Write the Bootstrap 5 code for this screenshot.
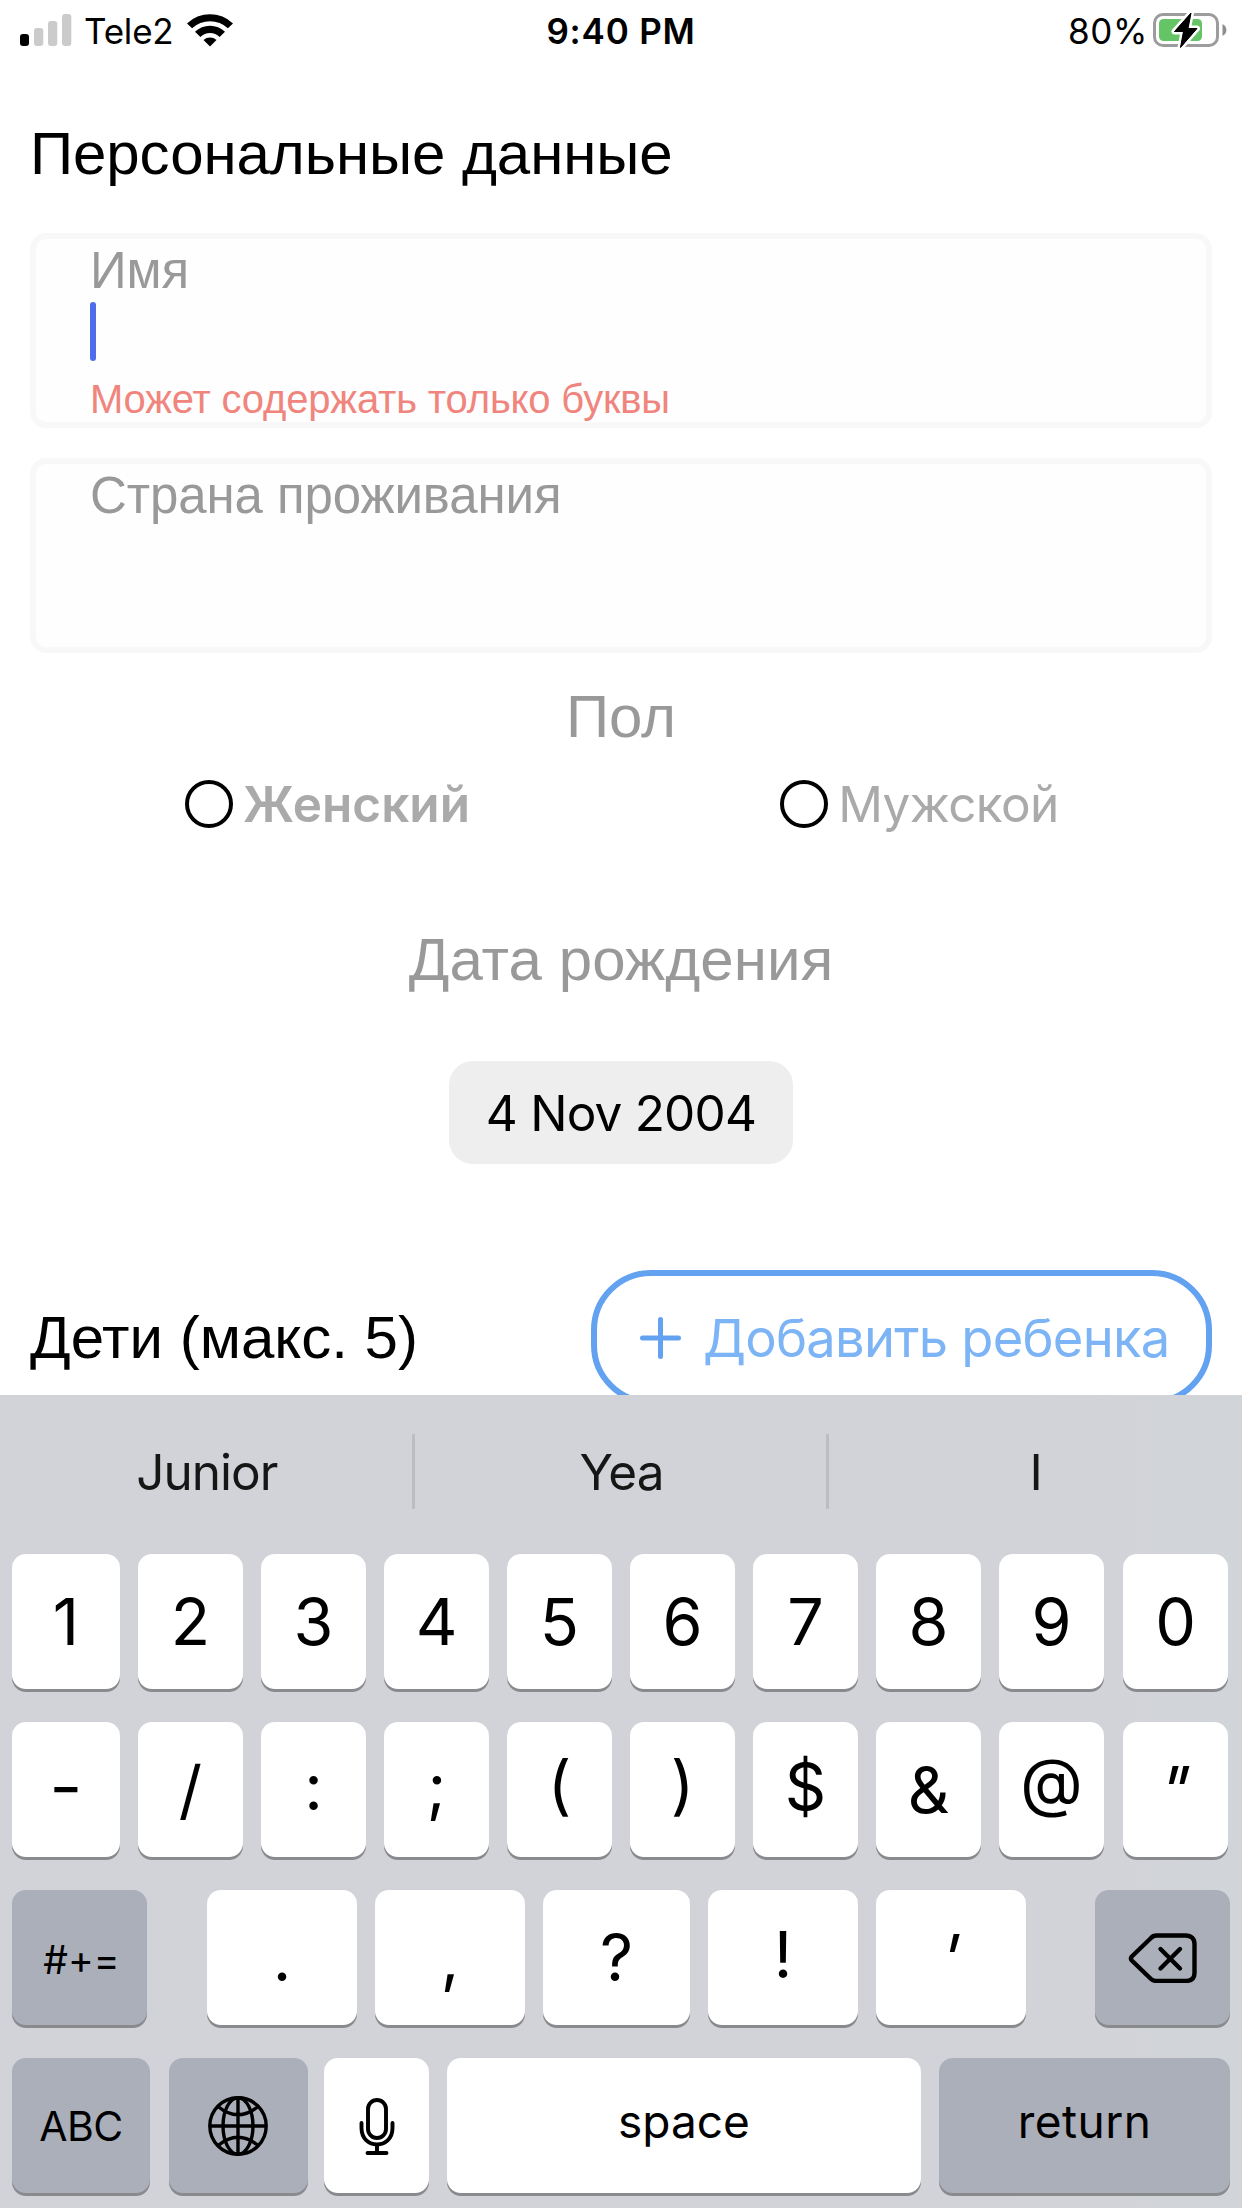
<!DOCTYPE html>
<html lang="ru">
<head>
<meta charset="utf-8">
<meta name="viewport" content="width=device-width, initial-scale=1">
<title>Персональные данные</title>
<link href="https://cdn.jsdelivr.net/npm/bootstrap@5.3.0/dist/css/bootstrap.min.css" rel="stylesheet">
<style>
  body { background: #fff; color: #000; font-family: Inter, "Liberation Sans", sans-serif; }
  svg { display: block; flex: none; }
  .screen { width: 1242px; height: 2208px; }
  .form-area { height: 1395px; padding: 0 30px; font-family: "Liberation Sans", Arial, sans-serif; }
  .form-area .ui-font, .status-bar { font-family: Inter, sans-serif; }

  /* status bar */
  .status-bar { height: 60px; margin: 0 -30px; padding: 0 15px 0 20px; font-size: 35px; line-height: 42px; }
  .status-bar > div { flex: 1 1 0; }
  .status-bar span { padding-top: 2px; }
  .clock { font-weight: 600; letter-spacing: .8px; margin-right: 5px; }
  .carrier { margin-left: 12px; letter-spacing: -.2px; }
  .wifi { margin-left: 13px; }
  .charge { letter-spacing: .6px; margin-right: 5px; }

  .heading { font-size: 60px; line-height: 60px; font-weight: 400; margin: 64px 0 49px; letter-spacing: -.08px; }
  .input-box { height: 195px; border: 6px solid #f8f8f8; border-radius: 16px; padding: 2px 54px 0; background: #fefefe; margin-bottom: 30px; }
  .input-box label { font-size: 51px; line-height: 60px; color: #999; letter-spacing: -.1px; }
  .caret { width: 6px; height: 59px; border-radius: 3px; background: #4f6dea; margin-top: 1px; }
  .hint { font-size: 40px; line-height: 46px; color: #f0857e; margin-top: 15px; letter-spacing: -.18px; white-space: nowrap; }
  .section-title { font-size: 60px; line-height: 60px; color: #999; text-align: center; }
  .sex-title { margin-top: 34px; }
  .sex-row { margin-top: 33px; height: 48px; font-size: 49.5px; line-height: 48px; color: #aaa; }
  .sex-row .choice { flex: 1 1 0; gap: 10px; padding-left: 5px; }
  .sex-row .male { letter-spacing: -.6px; padding-left: 7px; }
  .ring { width: 48px; height: 48px; border: 4px solid #000; border-radius: 50%; }
  .birth-title { margin-top: 102px; letter-spacing: .1px; }
  .date-chip { width: 344px; height: 103px; margin: 71px auto 0; padding-top: 2px; border-radius: 24px; background: #eee; font-size: 49.5px; letter-spacing: -.8px; }
  .children { margin-top: 106px; font-size: 60px; line-height: 60px; }
  .add-btn { width: 621px; height: 135px; border: 6px solid #62a2f0; border-radius: 60px; padding: 0 0 0 43px; gap: 22px; color: #7cb4f5; font-size: 52.5px; letter-spacing: -.76px; white-space: nowrap; line-height: 60px; }

  /* keyboard */
  .keyboard { height: 813px; background: linear-gradient(90deg, #d2d3d8 80%, #d1d4d9); padding: 0 12px; }
  .suggest { height: 153px; margin: 0 -12px 6px; font-size: 49.5px; color: #151717; }
  .suggest > div { flex: 1 1 0; text-align: center; letter-spacing: -1px; padding: 2px 0 0 2px; }
  .suggest > div:last-child { flex-basis: 3px; padding-left: 0; }
  .suggest i { width: 3px; height: 75px; background: #bbbdc1; border-radius: 1px; }
  .key-row { gap: 18px; height: 135px; margin-bottom: 33px; }
  .key { flex: none; width: 105px; height: 135px; border-radius: 14px; background: #fff; box-shadow: 0 3px 0 #898a8e; font-size: 64.6px; line-height: 78px; display: flex; align-items: center; justify-content: center; white-space: nowrap; }
  .key.first { width: 108px; }
  .key.last { margin-left: 1px; }
  .key.wide { width: 150px; }
  .key.func { background: #abafba; }
  .key.raise { padding-bottom: 6px; }
  .key.lift { padding-bottom: 10px; }
  .key .slant { transform: skewX(-14deg); }
  .key .dash { transform: scaleX(1.12); }
</style>
</head>
<body>
<div class="screen overflow-hidden">
  <main class="form-area overflow-hidden">
    <header class="status-bar d-flex align-items-center">
      <div class="d-flex align-items-center">
        <svg width="52" height="32" viewBox="0 0 52 32"><rect y="20" width="9" height="12" rx="3"/><g fill="#cbcbcb"><rect x="14" y="14" width="9.300" height="18" rx="3"/><rect x="28" y="7" width="9.300" height="25" rx="3"/><rect x="42" y="0" width="9.300" height="32" rx="3"/></g></svg>
        <span class="carrier">Tele2</span>
        <svg class="wifi" width="46" height="35" viewBox="0 0 46 35"><path d="M0 10.500A33 33 0 0 1 46 10.500L40.900 15.300A26 26 0 0 0 5.100 15.300Z"/><path d="M8 18.800A21.500 21.500 0 0 1 38 18.800L32.600 23.900A14 14 0 0 0 13.400 23.900Z"/><path d="M16.500 27A10 10 0 0 1 29.500 27L23 33.600Z"/></svg>
      </div>
      <span class="clock">9:40 PM</span>
      <div class="d-flex align-items-center justify-content-end">
        <span class="charge">80%</span>
        <svg width="74" height="38" viewBox="0 0 74 38"><rect x="1.500" y="3.500" width="63" height="31" rx="8.500" fill="none" stroke="#9c9c9c" stroke-width="3"/><path d="M69.500 13c5.200 2.500 5.200 9.500 0 12z" fill="#8e8e8e"/><rect x="6" y="8" width="43" height="22" rx="4.500" fill="#65c466"/><path d="M38 2L21.500 20.500h9L27.500 36.500L44 17.500h-9Z" fill="#000" stroke="#fff" stroke-width="6" stroke-linejoin="round" paint-order="stroke"/><path d="M38 2L21.500 20.500h9L27.500 36.500L44 17.500h-9Z" stroke="#000" stroke-width="1" stroke-linejoin="round"/></svg>
      </div>
    </header>

    <h1 class="heading">Персональные данные</h1>

    <div class="input-box">
      <label class="d-block">Имя</label>
      <div class="caret"></div>
      <div class="hint">Может содержать только буквы</div>
    </div>
    <div class="input-box mb-0">
      <label class="d-block">Страна проживания</label>
    </div>

    <div class="section-title sex-title">Пол</div>
    <div class="sex-row d-flex ui-font">
      <div class="choice d-flex justify-content-center"><span class="ring"></span><span class="fw-semibold">Женский</span></div>
      <div class="choice male d-flex justify-content-center"><span class="ring"></span><span>Мужской</span></div>
    </div>

    <div class="section-title birth-title">Дата рождения</div>
    <div class="date-chip ui-font d-flex align-items-center justify-content-center">4 Nov 2004</div>

    <div class="children d-flex align-items-center justify-content-between">
      <div>Дети (макс. 5)</div>
      <div class="add-btn ui-font d-flex align-items-center">
        <svg width="41" height="42" viewBox="0 0 41 42"><path d="M20.500 2.500V39.500M2.500 21H38.500" stroke="#62a2f0" stroke-width="5" stroke-linecap="round"/></svg>
        <span>Добавить ребенка</span>
      </div>
    </div>
  </main>

  <section class="keyboard">
    <div class="suggest d-flex align-items-center">
      <div>Junior</div><i></i><div>Yea</div><i></i><div>I</div>
    </div>
    <div class="key-row d-flex">
      <div class="key first">1</div><div class="key">2</div><div class="key">3</div><div class="key">4</div><div class="key">5</div><div class="key">6</div><div class="key">7</div><div class="key">8</div><div class="key">9</div><div class="key last">0</div>
    </div>
    <div class="key-row d-flex">
      <div class="key first raise"><span class="dash">-</span></div><div class="key">/</div><div class="key raise">:</div><div class="key raise">;</div><div class="key lift">(</div><div class="key lift">)</div><div class="key raise">$</div><div class="key">&amp;</div><div class="key" style="padding-bottom:15px">@</div><div class="key last"><span class="slant">"</span></div>
    </div>
    <div class="key-row d-flex">
      <div class="key func" style="width:135px;margin-right:42px;padding:4px 0 0 4px;font-size:39px">#+=</div>
      <div class="key wide">.</div><div class="key wide">,</div><div class="key" style="width:147px">?</div><div class="key wide raise">!</div><div class="key wide"><span class="slant">'</span></div>
      <div class="key func" style="width:135px;margin-left:51px"><svg width="69" height="51" viewBox="0 -1 68 51" fill="none" stroke="#000" stroke-width="4.400" stroke-linecap="round" stroke-linejoin="round"><path d="M28 2.500H57C63 2.500 66 6 66 11V40C66 45 63 48 57 48H28C25.500 48 24 47.500 22.500 46L3.300 27.500C2 26 2 25 3.300 23.500L22.500 5C24 3.200 25.500 2.500 28 2.500Z"/><path d="M32 16L51.500 35.500M51.500 16L32 35.500"/></svg></div>
    </div>
    <div class="key-row d-flex">
      <div class="key func" style="width:138px;font-size:41px;letter-spacing:-.5px">ABC</div>
      <div class="key func" style="width:139px;margin-left:1px;padding-right:2px"><svg width="60" height="60" viewBox="0 0 60 60" fill="none" stroke="#000" stroke-width="3.400"><circle cx="30" cy="30" r="28.200"/><ellipse cx="30" cy="30" rx="15" ry="28.200"/><path d="M30 1.500V58.500M1.500 30H58.500M10 10.500Q30 27 50 10.500M10 49.500Q30 33 50 49.500"/></svg></div>
      <div class="key" style="margin-left:-2px"><svg width="36" height="58" viewBox="0 0 36 58" fill="none" stroke="#000" stroke-width="3.900" stroke-linecap="round"><rect x="9" y="3" width="18" height="38" rx="9"/><path d="M2.500 26V31C2.500 53 33.500 53 33.500 31V26M18 48V56M8.500 56H27.500"/></svg></div>
      <div class="key lift" style="width:474px;font-size:46px">space</div>
      <div class="key func lift" style="width:291px;font-size:46px;letter-spacing:.45px">return</div>
    </div>
  </section>
</div>
<script src="https://cdn.jsdelivr.net/npm/bootstrap@5.3.0/dist/js/bootstrap.bundle.min.js"></script>
</body>
</html>
